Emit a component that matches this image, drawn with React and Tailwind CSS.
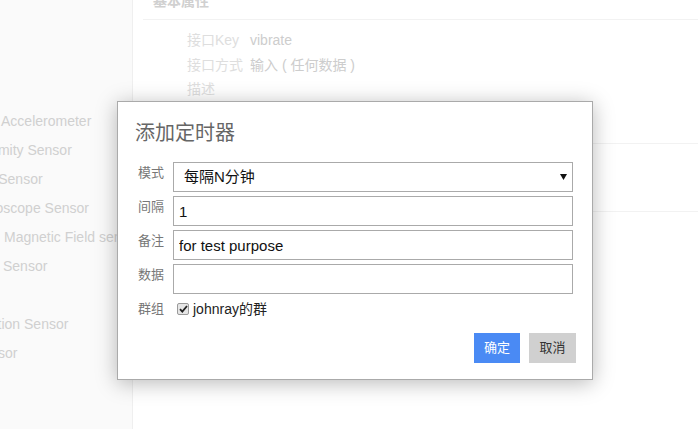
import React from "react";

const font = { fontFamily: '"Liberation Sans", "Noto Sans CJK SC", sans-serif' };

const sensors = [
  { name: "Linear Accelerometer", cls: "ml-[-41px]" },
  { name: "Proximity Sensor", cls: "ml-[-34px]" },
  { name: "Light Sensor", cls: "ml-[-36px]" },
  { name: "Gyroscope Sensor", cls: "ml-[-27px]" },
  { name: "Magnetic Field sensor", cls: "ml-[4px]" },
  { name: "Sensor", cls: "ml-[3px]" },
  { name: "", cls: "" },
  { name: "Rotation Sensor", cls: "ml-[-32px]" },
  { name: "Sensor", cls: "ml-[-27px]" },
];

const Field = ({ label, children }) => (
  <div className="flex mt-[4px]">
    <div className="w-[38px] shrink-0 pl-[3px] pt-[1px] text-[13px] leading-[20px] text-[#777]">
      {label}
    </div>
    {children}
  </div>
);

const App = () => {
  return (
    <div
      style={font}
      className="relative flex h-[429px] w-[698px] overflow-hidden bg-white"
    >
      <aside className="w-[133px] shrink-0 overflow-hidden border-r border-[#efefef] bg-[#fafafa] pt-[107px]">
        {sensors.map((s, i) => (
          <div
            key={i}
            className={`h-[29px] whitespace-nowrap text-[14px] leading-[29px] text-[#d0d0d0] ${s.cls}`}
          >
            {s.name}
          </div>
        ))}
      </aside>

      <main className="flex-1">
        <div className="ml-[10px] h-[20px] border-b border-[#f2f2f2] pl-[10px]">
          <h3 className="relative -top-[7px] text-[14px] font-bold leading-[16px] text-[#d0d0d0]">
            基本属性
          </h3>
        </div>
        <div className="pl-[54px] pt-[8px] text-[14px] leading-[24.5px]">
          <div className="flex">
            <span className="w-[63px] text-[#dedede]">接口Key</span>
            <span className="text-[#cdcdcd]">vibrate</span>
          </div>
          <div className="flex">
            <span className="w-[63px] text-[#dedede]">接口方式</span>
            <span className="whitespace-pre text-[#cdcdcd]">输入 ( 任何数据 )</span>
          </div>
          <div className="flex">
            <span className="w-[63px] text-[#dedede]">描述</span>
          </div>
        </div>
        <div className="mt-[41px] h-[68px] border-t border-[#f2f2f2]"></div>
        <div className="border-t border-[#f2f2f2]"></div>
      </main>

      <div className="absolute left-[117px] top-[101px] h-[279px] w-[476px] border border-[#aaa] bg-white pl-[17px] pr-[16px] pt-[17px] shadow-[0_3px_20px_rgba(0,0,0,0.28)]">
        <h2 className="h-[28px] text-[20px] leading-[28px] text-[#666]">添加定时器</h2>
        <div className="mt-[15px]">
          <Field label="模式">
            <div className="relative h-[30px] w-[400px]">
              <select
                defaultValue="n"
                style={font}
                className="h-full w-full appearance-none border border-[#aaa] bg-white pl-[10px] text-[15px] text-[#111] outline-none"
              >
                <option value="n">每隔N分钟</option>
              </select>
              <svg
                className="pointer-events-none absolute right-[6px] top-[12px]"
                width="7"
                height="6"
                viewBox="0 0 7 6"
              >
                <path d="M0 0h7L3.5 6z" fill="#111" />
              </svg>
            </div>
          </Field>
          <Field label="间隔">
            <input
              defaultValue="1"
              style={font}
              className="h-[30px] w-[400px] border border-[#aaa] px-[5px] text-[15px] text-[#111] outline-none"
            />
          </Field>
          <Field label="备注">
            <input
              defaultValue="for test purpose"
              style={font}
              className="h-[30px] w-[400px] border border-[#aaa] px-[5px] text-[15px] text-[#111] outline-none"
            />
          </Field>
          <Field label="数据">
            <input
              defaultValue=""
              style={font}
              className="h-[30px] w-[400px] border border-[#aaa] px-[5px] text-[15px] text-[#111] outline-none"
            />
          </Field>
          <div className="mt-[5px] flex h-[20px] items-center">
            <div className="w-[38px] shrink-0 pl-[3px] text-[13px] leading-[20px] text-[#777]">
              群组
            </div>
            <span className="ml-[4px] flex h-[12px] w-[12px] items-center justify-center rounded-[2px] border border-[#9a9a9a] bg-[#e6e6e6]">
              <svg width="9" height="8" viewBox="0 0 9 8">
                <path d="M1 4.2l2.3 2.4L8 1" stroke="#222" strokeWidth="1.8" fill="none" />
              </svg>
            </span>
            <span className="ml-[4px] text-[14px] text-[#222]">johnray的群</span>
          </div>
        </div>
        <div className="mt-[14px] flex justify-end gap-[9px]">
          <button className="h-[30px] w-[46px] bg-[#4a8af4] text-[13px] text-white">确定</button>
          <button className="h-[30px] w-[47px] bg-[#d0d0d0] text-[13px] text-[#333]">取消</button>
        </div>
      </div>
    </div>
  );
};

export default App;
